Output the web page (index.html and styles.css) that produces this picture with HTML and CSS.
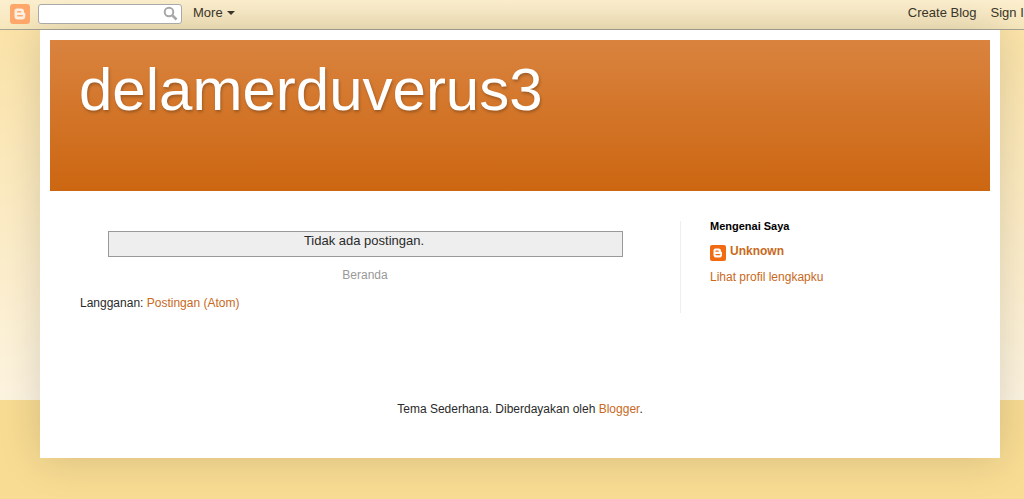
FILE: index.html
```html
<!DOCTYPE html>
<html>
<head>
<meta charset="utf-8">
<title>delamerduverus3</title>
<link rel="stylesheet" href="styles.css">
</head>
<body>
<div class="navbar">
	<svg class="nav_logo" width="20" height="20" viewBox="0 0 20 20">
		<rect width="20" height="20" rx="3" fill="#ffa76b"/>
		<path d="M7 4.5h4a3 3 0 0 1 3 3v1.2c.9 0 1.3.5 1.3 1.2v2.1a3.5 3.5 0 0 1-3.5 3.5H8a3.5 3.5 0 0 1-3.5-3.5V7A2.500 2.500 0 0 1 7 4.500z" fill="#fdf0e0"/>
		<path d="M7.800 7.700h2.700M7.800 11.800h4.400" stroke="#ffa76b" stroke-width="1.500" stroke-linecap="round"/>
	</svg>
	<div class="nav_search">
		<svg width="15" height="15" viewBox="0 0 15 15">
			<circle cx="6" cy="6" r="4.300" fill="none" stroke="#a8a8a8" stroke-width="2"/>
			<path d="M9.500 9.500l4 4" stroke="#a8a8a8" stroke-width="2.500"/>
		</svg>
	</div>
	<span class="nav_more">More <i class="caret"></i></span>
	<div class="nav_right">
		<span>Create Blog</span>
		<span>Sign In</span>
	</div>
</div>

<div class="content">
	<div class="header">
		<h1>delamerduverus3</h1>
	</div>
	<div class="columns">
		<div class="main">
			<div class="status">Tidak ada postingan.</div>
			<p class="home"><a class="grey" href="#">Beranda</a></p>
			<p class="feed">Langganan: <a href="#">Postingan (Atom)</a></p>
		</div>
		<div class="sidebar">
			<h2>Mengenai Saya</h2>
			<p class="author">
				<svg width="16" height="16" viewBox="0 0 16 16">
					<rect width="16" height="16" rx="2" fill="#f26a12"/>
					<path d="M5.500 3.500h3a2.500 2.500 0 0 1 2.500 2.500v.8c.7 0 1 .4 1 1v1.900a2.800 2.800 0 0 1-2.800 2.800H6.300a2.800 2.800 0 0 1-2.800-2.800V5.500a2 2 0 0 1 2-2z" fill="#fff"/>
					<path d="M6 6.200h2.200M6 9.600h3.800" stroke="#f26a12" stroke-width="1.200" stroke-linecap="round"/>
				</svg>
				<a href="#">Unknown</a>
			</p>
			<p class="profile"><a href="#">Lihat profil lengkapku</a></p>
		</div>
	</div>
	<div class="footer">Tema Sederhana. Diberdayakan oleh <a href="#">Blogger</a>.</div>
</div>
</body>
</html>
```

FILE: styles.css
```css
html, body {
	margin: 0;
	padding: 0;
}
body {
	height: 499px;
	overflow: hidden;
	font: 12px "Liberation Sans", Arial, sans-serif;
	color: #2a2a2a;
	background: #f8dc93 linear-gradient(#fbe3a8, #fdf4e0) no-repeat 0 30px / 100% 370px;
}
a {
	color: #c8691c;
	text-decoration: none;
}
a.grey {
	color: #999999;
}
p {
	margin: 0;
}

/* top bar */
.navbar {
	display: flex;
	align-items: center;
	box-sizing: border-box;
	height: 30px;
	padding: 0 0 2px 10px;
	border-bottom: 1px solid #a8a296;
	background: linear-gradient(#fcefcf, #f6e6bb);
	font-size: 13px;
	color: #3a3528;
	white-space: nowrap;
}
.nav_logo {
	flex: none;
}
.nav_search {
	display: flex;
	align-items: center;
	justify-content: flex-end;
	box-sizing: border-box;
	width: 144px;
	height: 20px;
	margin-left: 8px;
	padding-right: 3px;
	border: 1px solid #a9a9a9;
	border-radius: 3px;
	background: #ffffff;
}
.nav_more {
	margin: 0 0 2px 11px;
}
.caret {
	display: inline-block;
	margin-left: 1px;
	vertical-align: 2px;
	border: 4px solid transparent;
	border-top-color: #3a3528;
	border-bottom: 0;
}
.nav_right {
	display: flex;
	gap: 14px;
	margin: 0 -7px 2px auto;
}

/* page */
.content {
	box-sizing: border-box;
	width: 960px;
	height: 428px;
	margin: 0 0 0 40px;
	padding: 10px 10px 0;
	background: #ffffff;
	box-shadow: 0 0 40px rgba(0, 0, 0, .15);
}
.header {
	box-sizing: border-box;
	height: 151px;
	padding: 15px 29px 0;
	background: linear-gradient(#d9833f, #cc6611);
}
.header h1 {
	margin: 0;
	font-size: 60px;
	font-weight: normal;
	line-height: 69px;
	color: #ffffff;
	text-shadow: 1px 2px 3px rgba(0, 0, 0, .25);
}
.columns {
	display: flex;
	margin-top: 30px;
}
.main {
	box-sizing: border-box;
	width: 630px;
	padding: 10px 30px 0;
}
.status {
	box-sizing: border-box;
	width: 515px;
	height: 26px;
	margin: 0 auto 0 28px;
	padding: 1px 3px 0 0;
	border: 1px solid #999999;
	background: #eeeeee;
	font-size: 13px;
	line-height: 16px;
	text-align: center;
}
.home {
	margin-top: 11px;
	line-height: 14px;
	text-align: center;
}
.feed {
	margin-top: 14px;
	line-height: 14px;
}
.sidebar {
	box-sizing: border-box;
	height: 92px;
	padding: 0 0 0 29px;
	border-left: 1px solid #eeeeee;
}
.sidebar h2 {
	margin: -1px 0 0;
	font-size: 11px;
	line-height: 12px;
	color: #000000;
}
.author {
	display: flex;
	gap: 4px;
	margin-top: 13px;
	font-weight: bold;
	line-height: 13px;
}
.author svg {
	margin-top: 0;
}
.profile {
	margin-top: 9px;
	line-height: 14px;
}
.footer {
	margin-top: 89px;
	line-height: 14px;
	text-align: center;
}
```
